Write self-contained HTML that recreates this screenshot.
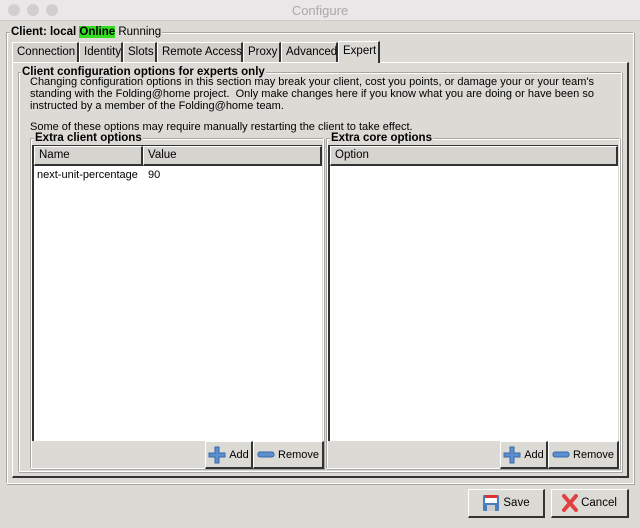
<!DOCTYPE html>
<html><head><meta charset="utf-8"><style>
*{box-sizing:border-box;margin:0;padding:0}
body{width:640px;height:528px;background:#dcdad5;font-family:"Liberation Sans",sans-serif;font-size:11px;color:#000;position:relative;overflow:hidden;white-space:nowrap}
.a{position:absolute}
.title{left:0;top:0;width:640px;height:21px;background:#e9e7e7;border-bottom:1px solid #cfcdcd}
.dot{width:12px;height:12px;border-radius:50%;background:#d0cece;top:4px}
.frame{border-top:1px solid #a8a6a2;border-left:1px solid #a8a6a2;border-right:1px solid #fff;border-bottom:1px solid #fff;box-shadow:inset 1px 1px 0 #fff,1px 1px 0 #a8a6a2}
.lbl{background:#dcdad5;font-weight:bold;padding:0 1px;line-height:12px}
.tab{top:42px;height:20px;border-left:1px solid #fff;border-right:2px solid #333;border-top:1px solid #fff;background:#d2d0cb;line-height:19px;padding:0 4px;font-size:11.5px}
.btn{background:#dcdad5;border-top:1px solid #fff;border-left:1px solid #fff;border-right:2px solid #333;border-bottom:2px solid #333;font-size:11px;display:flex;align-items:center;justify-content:center;gap:3px}
.hdr{background:#d6d4cf;border:1px solid #fff;border-right:2px solid #333;border-bottom:2px solid #333;height:20px;line-height:17px;padding-left:4px;font-size:11.5px}
.txt{font-size:11px;line-height:12px;left:30px}
</style></head><body>
<div class="a title"></div>
<div class="a dot" style="left:8px"></div><div class="a dot" style="left:27px"></div><div class="a dot" style="left:46px"></div>
<div class="a" style="left:0;width:640px;top:3px;text-align:center;color:#a9a7a7;font-size:13px">Configure</div>

<div class="a frame" style="left:6px;top:32px;width:628px;height:452px"></div>
<div class="a lbl" style="left:10px;top:26px;font-size:11.5px">Client: local <span style="background:#33dd22">Online</span> <span style="font-weight:normal">Running</span></div>

<div class="a" style="left:12px;top:62px;width:617px;height:416px;border-top:1px solid #fff;border-left:1px solid #fff;border-right:2px solid #333;border-bottom:2px solid #333"></div>
<div class="a tab" style="left:12px;width:67px">Connection</div>
<div class="a tab" style="left:79px;width:44px">Identity</div>
<div class="a tab" style="left:123px;width:34px">Slots</div>
<div class="a tab" style="left:157px;width:86px">Remote Access</div>
<div class="a tab" style="left:243px;width:38px">Proxy</div>
<div class="a tab" style="left:281px;width:57px">Advanced</div>
<div class="a tab" style="left:338px;top:41px;height:22px;width:42px;background:#dcdad5;border-bottom:none">Expert</div>

<div class="a frame" style="left:18px;top:72px;width:604px;height:400px"></div>
<div class="a lbl" style="left:21px;top:66px;font-size:11.5px">Client configuration options for experts only</div>
<div class="a txt" style="top:76px">Changing configuration options in this section may break your client, cost you points, or damage your or your team's</div>
<div class="a txt" style="top:88px">standing with the Folding@home project.&nbsp; Only make changes here if you know what you are doing or have been so</div>
<div class="a txt" style="top:100px">instructed by a member of the Folding@home team.</div>
<div class="a txt" style="top:121px">Some of these options may require manually restarting the client to take effect.</div>

<div class="a frame" style="left:30px;top:138px;width:294px;height:331px"></div>
<div class="a lbl" style="left:34px;top:132px;font-size:11.5px">Extra client options</div>
<div class="a" style="left:32px;top:145px;width:290px;height:296px;background:#fff;border-left:2px solid #333;border-top:2px solid #333"></div>
<div class="a hdr" style="left:34px;top:146px;width:109px">Name</div>
<div class="a hdr" style="left:143px;top:146px;width:179px">Value</div>
<div class="a" style="left:37px;top:169px">next-unit-percentage</div>
<div class="a" style="left:148px;top:169px">90</div>
<div class="a btn" style="left:205px;top:441px;width:48px;height:28px"><svg width="18" height="18" viewBox="0 0 18 18"><path d="M7 1h4v6h6v4h-6v6H7v-6H1V7h6z" fill="#5b8fd0" stroke="#3a6aa8"/></svg>Add</div>
<div class="a btn" style="left:253px;top:441px;width:71px;height:28px"><svg width="18" height="8" viewBox="0 0 18 8"><rect x="1" y="1" width="16" height="5" rx="2" fill="#5b8fd0" stroke="#3a6aa8"/></svg>Remove</div>

<div class="a frame" style="left:326px;top:138px;width:294px;height:331px"></div>
<div class="a lbl" style="left:330px;top:132px;font-size:11.5px">Extra core options</div>
<div class="a" style="left:328px;top:145px;width:290px;height:296px;background:#fff;border-left:2px solid #333;border-top:2px solid #333"></div>
<div class="a hdr" style="left:330px;top:146px;width:288px">Option</div>
<div class="a btn" style="left:500px;top:441px;width:48px;height:28px"><svg width="18" height="18" viewBox="0 0 18 18"><path d="M7 1h4v6h6v4h-6v6H7v-6H1V7h6z" fill="#5b8fd0" stroke="#3a6aa8"/></svg>Add</div>
<div class="a btn" style="left:548px;top:441px;width:71px;height:28px"><svg width="18" height="8" viewBox="0 0 18 8"><rect x="1" y="1" width="16" height="5" rx="2" fill="#5b8fd0" stroke="#3a6aa8"/></svg>Remove</div>

<div class="a btn" style="left:468px;top:489px;width:77px;height:29px;font-size:11.5px"><svg width="18" height="18" viewBox="0 0 18 18"><rect x="1" y="1" width="16" height="16" rx="1" fill="#4a7cc0"/><rect x="3" y="1" width="12" height="3" fill="#e03030"/><rect x="3" y="4" width="12" height="5" fill="#fff"/><rect x="5" y="11" width="8" height="6" fill="#ccc"/></svg>Save</div>
<div class="a btn" style="left:551px;top:489px;width:78px;height:29px;font-size:11.5px"><svg width="16" height="18" viewBox="0 0 16 18"><path d="M2 2l12 14M14 2L2 16" stroke="#e04040" stroke-width="4" stroke-linecap="round"/></svg>Cancel</div>
</body></html>
